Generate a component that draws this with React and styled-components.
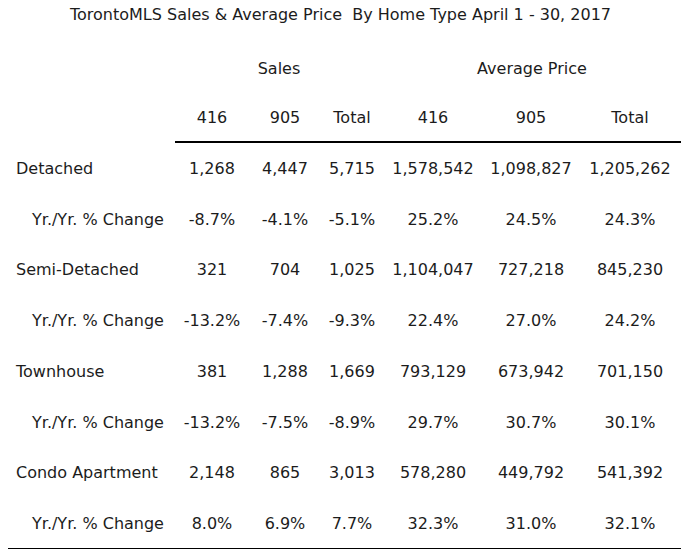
import React from 'react';
import styled, { createGlobalStyle } from 'styled-components';

const GlobalStyle = createGlobalStyle`
    body {
        margin: 0;
        background: #ffffff;
        font-family: "DejaVu Sans", Verdana, sans-serif;
        color: #1c1c1c;
    }
`;

const Page = styled.div`
    width: 699px;
    height: 559px;
    overflow: hidden;
`;

const Title = styled.h1`
    margin: 0 0 17px;
    padding: 5px 0 0 70px;
    font-size: 16px;
    font-weight: normal;
    line-height: 20px;
    white-space: pre;
`;

const Table = styled.table`
    margin-left: 8px;
    border-collapse: collapse;
    table-layout: fixed;
    font-size: 16px;
`;

const HeadRow = styled.tr`
    height: 50px;
`;

const Row = styled.tr`
    height: 50.75px;
`;

const Cell = styled.td`
    padding: 2px 0 0;
    text-align: center;
    vertical-align: middle;
    white-space: nowrap;
    border-top: ${(p) => (p.$ruled ? '2px solid #000' : 'none')};
    border-bottom: ${(p) => (p.$last ? '1px solid #000' : 'none')};
`;

const Label = styled(Cell)`
    text-align: left;
    padding-left: ${(p) => (p.$sub ? '24px' : '8px')};
`;

const widths = [167, 74, 72, 62, 100, 96, 102];

const rows = [
    ['Detached', '1,268', '4,447', '5,715', '1,578,542', '1,098,827', '1,205,262'],
    ['Yr./Yr. % Change', '-8.7%', '-4.1%', '-5.1%', '25.2%', '24.5%', '24.3%'],
    ['Semi-Detached', '321', '704', '1,025', '1,104,047', '727,218', '845,230'],
    ['Yr./Yr. % Change', '-13.2%', '-7.4%', '-9.3%', '22.4%', '27.0%', '24.2%'],
    ['Townhouse', '381', '1,288', '1,669', '793,129', '673,942', '701,150'],
    ['Yr./Yr. % Change', '-13.2%', '-7.5%', '-8.9%', '29.7%', '30.7%', '30.1%'],
    ['Condo Apartment', '2,148', '865', '3,013', '578,280', '449,792', '541,392'],
    ['Yr./Yr. % Change', '8.0%', '6.9%', '7.7%', '32.3%', '31.0%', '32.1%'],
];

export default function App() {
    return (
        <Page>
            <GlobalStyle />
            <Title>TorontoMLS Sales &amp; Average Price  By Home Type April 1 - 30, 2017</Title>
            <Table>
                <colgroup>
                    {widths.map((w, i) => (
                        <col key={i} style={{ width: w }} />
                    ))}
                </colgroup>
                <tbody>
                    <HeadRow>
                        <Cell />
                        <Cell colSpan={3}>Sales</Cell>
                        <Cell colSpan={3}>Average Price</Cell>
                    </HeadRow>
                    <HeadRow>
                        <Cell />
                        <Cell>416</Cell>
                        <Cell>905</Cell>
                        <Cell>Total</Cell>
                        <Cell>416</Cell>
                        <Cell>905</Cell>
                        <Cell>Total</Cell>
                    </HeadRow>
                    {rows.map((r, i) => {
                        const last = i === rows.length - 1;
                        return (
                            <Row key={i}>
                                <Label $sub={i % 2 === 1} $ruled={false} $last={last}>
                                    {r[0]}
                                </Label>
                                {r.slice(1).map((v, j) => (
                                    <Cell key={j} $ruled={i === 0} $last={last}>
                                        {v}
                                    </Cell>
                                ))}
                            </Row>
                        );
                    })}
                </tbody>
            </Table>
        </Page>
    );
}
